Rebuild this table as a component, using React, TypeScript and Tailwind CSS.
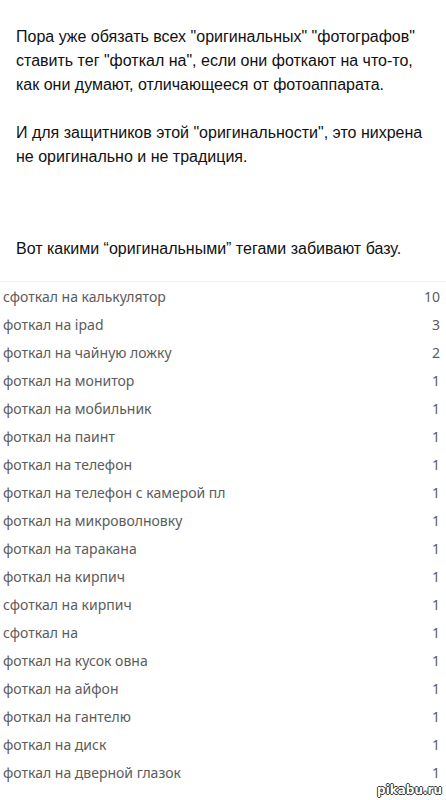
import React from "react";

// Tag counts shown in the list below the post text
const tags: [string, number][] = [
  ["сфоткал на калькулятор", 10],
  ["фоткал на ipad", 3],
  ["фоткал на чайную ложку", 2],
  ["фоткал на монитор", 1],
  ["фоткал на мобильник", 1],
  ["фоткал на паинт", 1],
  ["фоткал на телефон", 1],
  ["фоткал на телефон с камерой пл", 1],
  ["фоткал на микроволновку", 1],
  ["фоткал на таракана", 1],
  ["фоткал на кирпич", 1],
  ["сфоткал на кирпич", 1],
  ["сфоткал на", 1],
  ["фоткал на кусок овна", 1],
  ["фоткал на айфон", 1],
  ["фоткал на гантелю", 1],
  ["фоткал на диск", 1],
  ["фоткал на дверной глазок", 1],
];

export default function App() {
  return (
    <div className="relative w-[446px] h-[800px] overflow-hidden bg-white">
      <div className="px-4 pt-[25px] text-[16px] leading-6 text-[#111] font-['Liberation_Sans',Arial,sans-serif]">
        <p>
          Пора уже обязать всех "оригинальных" "фотографов" ставить тег "фоткал на", если они фоткают на что-то,
          как они думают, отличающееся от фотоаппарата.
        </p>
        <p className="mt-6">
          И для защитников этой "оригинальности", это нихрена не оригинально и не традиция.
        </p>
        <p className="mt-[68px]">Вот какими “оригинальными” тегами забивают базу.</p>
      </div>

      <ul className="mt-[20px] border-t border-[#f3f3f3] text-[14px] text-[#5c5c5c] font-['Noto_Sans',Tahoma,sans-serif]">
        {tags.map(([name, count]) => (
          <li key={name} className="flex h-7 items-center justify-between pl-[3px] pr-[6px]">
            <span>{name}</span>
            <span>{count}</span>
          </li>
        ))}
      </ul>

      {/* pikabu watermark over the bottom-right corner */}
      <span className="absolute right-[4px] bottom-[1px] text-[12px] font-bold text-white font-['DejaVu_Sans',sans-serif] [text-shadow:1px_0_0_#333,-1px_0_0_#333,0_1px_0_#333,0_-1px_0_#333]">
        pikabu.ru
      </span>
    </div>
  );
}
